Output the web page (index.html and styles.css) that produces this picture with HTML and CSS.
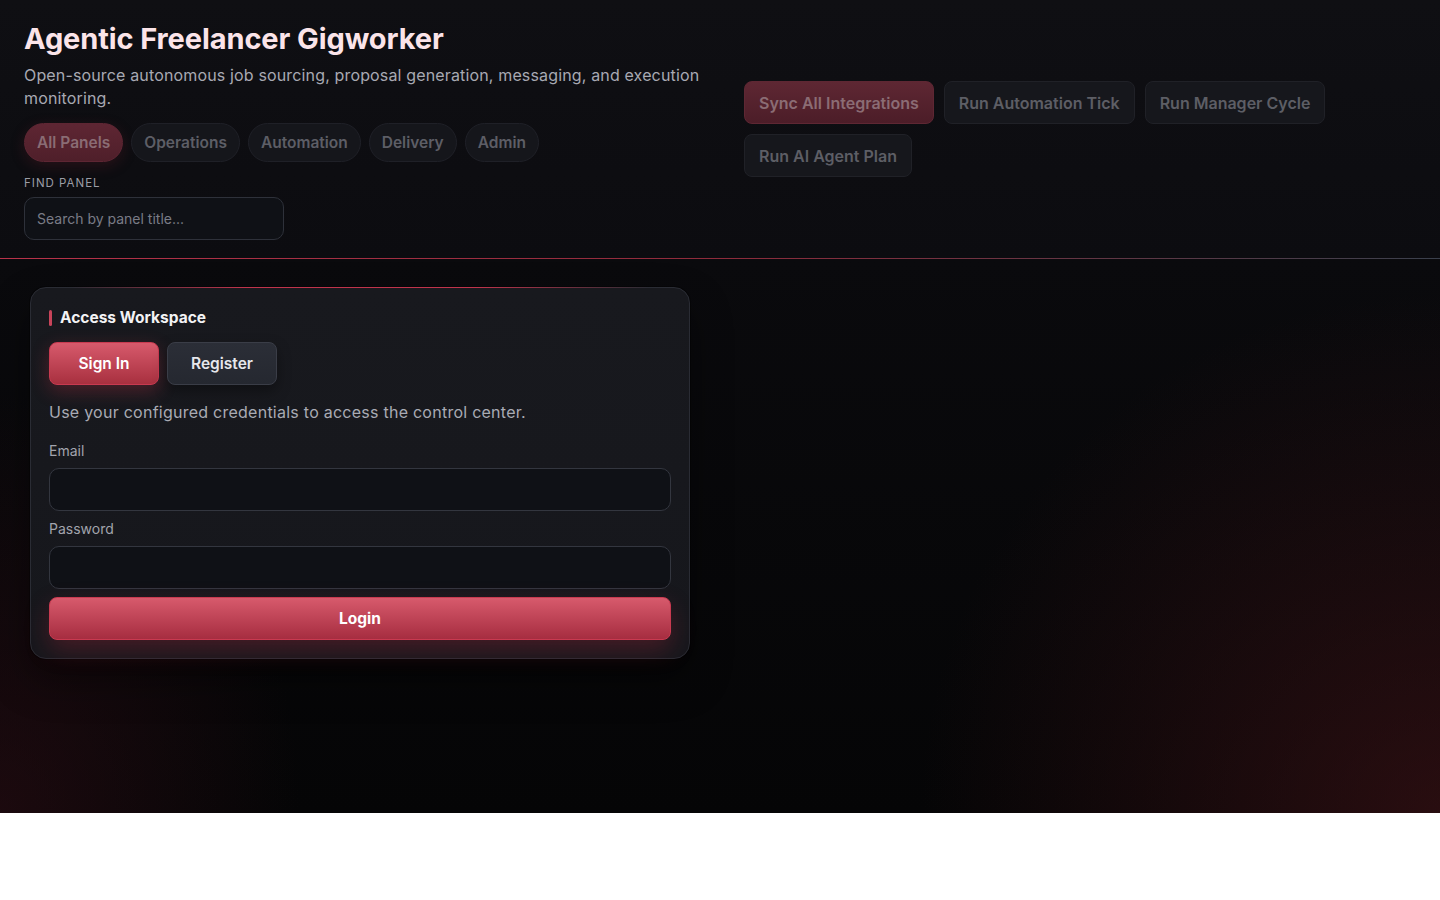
FILE: index.html
```
<!DOCTYPE html>
<html lang="en">
<head>
    <meta charset="UTF-8">
    <meta name="viewport" content="width=device-width, initial-scale=1.0">
    <title>Agentic Freelancer Gigworker</title>
    <link rel="stylesheet" href="styles.css">
</head>
<body>
    <div class="app">
        <header class="topbar">
            <div class="topbar-main">
                <h1>Agentic Freelancer Gigworker</h1>
                <p class="tagline">Open-source autonomous job sourcing, proposal generation, messaging, and execution monitoring.</p>

                <nav class="panel-tabs">
                    <button class="tab active" disabled>All Panels</button>
                    <button class="tab" disabled>Operations</button>
                    <button class="tab" disabled>Automation</button>
                    <button class="tab" disabled>Delivery</button>
                    <button class="tab" disabled>Admin</button>
                </nav>

                <label class="find-label" for="panelSearch">Find Panel</label>
                <input type="text" id="panelSearch" class="find-input" placeholder="Search by panel title...">
            </div>

            <div class="topbar-actions">
                <button class="action primary" disabled>Sync All Integrations</button>
                <button class="action" disabled>Run Automation Tick</button>
                <button class="action" disabled>Run Manager Cycle</button>
                <button class="action" disabled>Run AI Agent Plan</button>
            </div>
        </header>

        <main class="workspace">
            <section class="auth-card">
                <h2 class="card-title">Access Workspace</h2>

                <div class="auth-switch">
                    <button class="switch-btn active">Sign In</button>
                    <button class="switch-btn">Register</button>
                </div>

                <p class="auth-hint">Use your configured credentials to access the control center.</p>

                <form class="auth-form" id="loginForm">
                    <label for="email">Email</label>
                    <input type="email" id="email">

                    <label for="password">Password</label>
                    <input type="password" id="password">

                    <button type="submit" class="login-btn">Login</button>
                </form>
            </section>
        </main>
    </div>
</body>
</html>
```

FILE: styles.css
```
* {
    margin: 0;
    padding: 0;
    box-sizing: border-box;
}

body {
    font-family: Inter, 'Noto Sans', 'Liberation Sans', sans-serif;
    background: #fff;
    color: #e8e8ec;
}

button,
input {
    font-family: inherit;
}

.topbar {
    display: grid;
    grid-template-columns: 696px 1fr;
    gap: 24px;
    align-items: center;
    padding: 20px 24px 19px;
    background:
        linear-gradient(90deg, #b8334a 0%, #8e2b3b 50%, #3a404c 100%) bottom / 100% 1px no-repeat,
        linear-gradient(180deg, #0f0f13 0%, #0c0c10 100%);
}

.topbar h1 {
    font-size: 29px;
    font-weight: 700;
    letter-spacing: -0.1px;
    line-height: 38px;
    color: #fbe4e9;
}

.tagline {
    margin-top: 6px;
    font-size: 16px;
    letter-spacing: 0.15px;
    line-height: 23px;
    color: #a8a9b2;
}

.panel-tabs {
    display: flex;
    gap: 8px;
    margin-top: 13px;
}

.tab {
    height: 39px;
    padding: 0 12px;
    border-radius: 20px;
    border: 1px solid #1f2027;
    background: #15161b;
    color: #5d5e66;
    font-size: 15.5px;
    font-weight: 600;
}

.tab.active {
    background: linear-gradient(180deg, #5e2633 0%, #4f1f2a 100%);
    border-color: #5e2633;
    color: #8a6c74;
    box-shadow: 0 4px 14px rgba(120, 30, 45, 0.25);
}

.find-label {
    display: block;
    margin-top: 14px;
    font-size: 11.5px;
    letter-spacing: 1px;
    text-transform: uppercase;
    color: #9c9da6;
}

.find-input {
    display: block;
    margin-top: 7px;
    width: 260px;
    height: 43px;
    padding: 0 12px;
    border-radius: 10px;
    border: 1px solid #2e313a;
    background: #0f1116;
    color: #e8e8ec;
    font-size: 14px;
}

.find-input::placeholder {
    color: #7a7c86;
}

.topbar-actions {
    display: flex;
    flex-wrap: wrap;
    gap: 10px;
    margin-top: -2px;
}

.action {
    height: 43px;
    padding: 0 14px;
    border-radius: 8px;
    border: 1px solid #202127;
    background: #16171c;
    color: #5d5e65;
    font-size: 16px;
    font-weight: 600;
}

.action.primary {
    background: linear-gradient(180deg, #5e2733 0%, #4c1d28 100%);
    border-color: #5e2733;
    color: #8b6c74;
}

.workspace {
    height: 554px;
    padding: 28px 30px;
    background:
        radial-gradient(ellipse 520px 520px at 100% 100%, rgba(70, 20, 24, 0.55), transparent 100%),
        radial-gradient(ellipse 300px 420px at 0% 100%, rgba(50, 14, 22, 0.5), transparent 100%),
        linear-gradient(180deg, #0a0a0d 0%, #050506 100%);
}

.auth-card {
    width: 660px;
    padding: 18px;
    border-radius: 16px;
    border: 1px solid #2a2c34;
    background: linear-gradient(180deg, #18191e 0%, #16171c 100%);
    box-shadow: 0 0 0 1px rgba(0, 0, 0, 0.3), 0 20px 40px rgba(0, 0, 0, 0.4);
    position: relative;
}

.auth-card::before {
    content: '';
    position: absolute;
    top: -1px;
    left: 40px;
    right: 40px;
    height: 1px;
    background: linear-gradient(90deg, transparent, #c0344c 30%, #c0344c 70%, transparent);
}

.card-title {
    display: flex;
    align-items: center;
    gap: 8px;
    font-size: 15.5px;
    font-weight: 700;
    line-height: 24px;
    color: #f3f3f5;
}

.card-title::before {
    content: '';
    width: 3px;
    height: 16px;
    border-radius: 2px;
    background: #c8445a;
}

.auth-switch {
    display: flex;
    gap: 8px;
    margin-top: 12px;
}

.switch-btn {
    width: 110px;
    height: 43px;
    border-radius: 8px;
    border: 1px solid #3a3d47;
    background: linear-gradient(180deg, #2b2e37 0%, #252830 100%);
    color: #e6e7ec;
    font-size: 15.5px;
    font-weight: 600;
    box-shadow: 0 6px 14px rgba(0, 0, 0, 0.35);
}

.switch-btn.active {
    border-color: #c83a50;
    background: linear-gradient(180deg, #d75a6c 0%, #a8303f 100%);
    color: #fff;
    box-shadow: 0 6px 18px rgba(200, 50, 70, 0.3);
}

.auth-hint {
    margin-top: 15px;
    font-size: 16px;
    letter-spacing: 0.25px;
    line-height: 24px;
    color: #a9abb4;
}

.auth-form {
    display: flex;
    flex-direction: column;
    margin-top: 17px;
}

.auth-form label {
    font-size: 14px;
    line-height: 20px;
    color: #a2a4ad;
}

.auth-form input {
    height: 43px;
    margin-top: 7px;
    margin-bottom: 8px;
    padding: 0 12px;
    border-radius: 10px;
    border: 1px solid #33363f;
    background: #0f1116;
    color: #e8e8ec;
    font-size: 15px;
}

.login-btn {
    height: 43px;
    border-radius: 8px;
    border: 1px solid #c83a50;
    background: linear-gradient(180deg, #d75a6c 0%, #a62d40 100%);
    color: #fff;
    font-size: 15.5px;
    font-weight: 700;
    box-shadow: 0 10px 24px rgba(180, 40, 60, 0.3);
}
```
